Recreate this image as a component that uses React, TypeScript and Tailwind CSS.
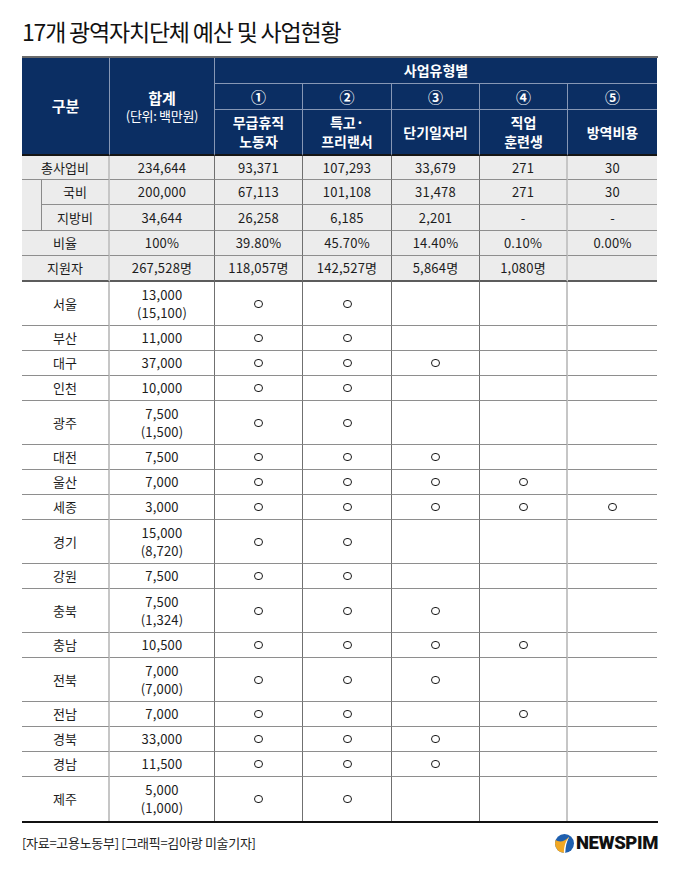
import React from 'react';

type Region = [string, string[], number[]];

const regions: Region[] = [
  ['서울', ['13,000', '(15,100)'], [1, 1, 0, 0, 0]],
  ['부산', ['11,000'], [1, 1, 0, 0, 0]],
  ['대구', ['37,000'], [1, 1, 1, 0, 0]],
  ['인천', ['10,000'], [1, 1, 0, 0, 0]],
  ['광주', ['7,500', '(1,500)'], [1, 1, 0, 0, 0]],
  ['대전', ['7,500'], [1, 1, 1, 0, 0]],
  ['울산', ['7,000'], [1, 1, 1, 1, 0]],
  ['세종', ['3,000'], [1, 1, 1, 1, 1]],
  ['경기', ['15,000', '(8,720)'], [1, 1, 0, 0, 0]],
  ['강원', ['7,500'], [1, 1, 0, 0, 0]],
  ['충북', ['7,500', '(1,324)'], [1, 1, 1, 0, 0]],
  ['충남', ['10,500'], [1, 1, 1, 1, 0]],
  ['전북', ['7,000', '(7,000)'], [1, 1, 1, 0, 0]],
  ['전남', ['7,000'], [1, 1, 0, 1, 0]],
  ['경북', ['33,000'], [1, 1, 1, 0, 0]],
  ['경남', ['11,500'], [1, 1, 1, 0, 0]],
  ['제주', ['5,000', '(1,000)'], [1, 1, 0, 0, 0]],
];

const vb = [
  'border-r border-r-[#8a8a8a]',
  'border-r-2 border-r-[#c6c6c6]',
  'border-r border-r-[#707070]',
  'border-r border-r-[#707070]',
  'border-r border-r-[#707070]',
  'border-r border-r-[#707070]',
  'border-r-2 border-r-[#c6c6c6]',
  '',
];

const hb = 'border-b border-b-[#8e8e8e]';

function Cell({ children, className = '' }: { children?: React.ReactNode; className?: string }) {
  return (
    <div className={`flex flex-col items-center justify-center text-center ${className}`}>{children}</div>
  );
}

const hdr = 'bg-[#0b2e63] text-white';
const hdrB = 'border-b border-b-[#8797b5]';
const hdrR = 'border-r border-r-[#8797b5]';
const hdrBottom = 'border-b-2 border-b-[#151515]';

function Mark() {
  return <span className="inline-block w-[9px] h-[8px] rounded-full border-[1.5px] border-[#1a1a1a]" />;
}

function Logo() {
  return (
    <div className="flex items-center gap-[2px]">
      <svg width="19" height="19" viewBox="0 0 20 20">
        <defs>
          <clipPath id="lc">
            <circle cx="10" cy="10" r="10" />
          </clipPath>
        </defs>
        <circle cx="10" cy="10" r="10" fill="#1f5fae" />
        <g clipPath="url(#lc)">
          <path d="M0 6 Q7 11 15 3 Q10 11 10.5 21 L0 21 Z" fill="#f1a824" />
          <path d="M15 3 Q9.5 9 9.2 20 L10.8 20 Q11 10 15 3 Z" fill="#ffffff" />
        </g>
      </svg>
      <span className="inline-block font-['Roboto',sans-serif] font-black text-[18.5px] leading-none tracking-[-0.4px] text-[#111]">
        NEWSPIM
      </span>
    </div>
  );
}

export default function App() {
  const types = ['①', '②', '③', '④', '⑤'];
  const names: string[][] = [['무급휴직', '노동자'], ['특고·', '프리랜서'], ['단기일자리'], ['직업', '훈련생'], ['방역비용']];

  const grayRows: { label: string; sub?: boolean; vals: string[]; h: string }[] = [
    { label: '총사업비', vals: ['234,644', '93,371', '107,293', '33,679', '271', '30'], h: hb },
    { label: '국비', sub: true, vals: ['200,000', '67,113', '101,108', '31,478', '271', '30'], h: hb },
    { label: '지방비', sub: true, vals: ['34,644', '26,258', '6,185', '2,201', '-', '-'], h: hb },
    { label: '비율', vals: ['100%', '39.80%', '45.70%', '14.40%', '0.10%', '0.00%'], h: hb },
    { label: '지원자', vals: ['267,528명', '118,057명', '142,527명', '5,864명', '1,080명', ''], h: 'border-b-2 border-b-[#5c5c5c]' },
  ];

  return (
    <div className="w-[680px] h-[874px] bg-white px-[22px] pt-[17px] font-['Noto_Sans_CJK_KR','Noto_Sans',sans-serif] text-[#1c1c1c]">
      <h1 className="h-[28px] leading-[28px] text-[23px] font-normal tracking-[-1.2px] text-[#111] mb-[11px]">
        17개 광역자치단체 예산 및 사업현황
      </h1>

      <div className="grid border-t-2 border-t-[#6a6a6a] border-b-2 border-b-[#111] grid-cols-[20px_68px_105px_88px_89px_88px_88px_89px] grid-rows-[26px_26px_46px_24px_25px_26px_25px_26px_44px_25px_25px_25px_44px_25px_25px_25px_44px_25px_44px_25px_44px_25px_25px_25px_44px]">
        {/* header */}
        <Cell className={`col-span-2 row-span-3 ${hdr} ${hdrR} ${hdrBottom} text-[15px] font-bold`}>구분</Cell>
        <Cell className={`row-span-3 ${hdr} ${hdrR} ${hdrBottom}`}>
          <span className="text-[15px] font-bold leading-[19px]">합계</span>
          <span className="text-[13px] leading-[18px] tracking-[-0.3px]">(단위: 백만원)</span>
        </Cell>
        <Cell className={`col-span-5 ${hdr} ${hdrB} text-[14px] font-bold`}>사업유형별</Cell>
        {types.map((t, i) => (
          <Cell key={t} className={`${hdr} ${hdrB} ${i < 4 ? hdrR : ''} text-[15px] font-bold leading-none`}>
            {t}
          </Cell>
        ))}
        {names.map((n, i) => (
          <Cell key={i} className={`${hdr} ${hdrBottom} ${i < 4 ? hdrR : ''} text-[14px] font-bold leading-[19px]`}>
            {n.map((l) => (
              <span key={l}>{l}</span>
            ))}
          </Cell>
        ))}

        {/* gray section */}
        {grayRows.map((r, ri) => (
          <React.Fragment key={r.label}>
            {r.label === '국비' && (
              <Cell className={`row-span-2 bg-[#ececec] ${vb[0]} ${hb}`} />
            )}
            <Cell
              className={`${r.sub ? '' : 'col-span-2'} bg-[#ececec] ${vb[1]} ${r.h} text-[13px] leading-[18px]`}
            >
              {r.label}
            </Cell>
            {r.vals.map((v, i) => (
              <Cell key={ri + '-' + i} className={`bg-[#ececec] ${vb[i + 2]} ${r.h} text-[13px] tracking-[0.2px] leading-[18px]`}>
                {v}
              </Cell>
            ))}
          </React.Fragment>
        ))}

        {/* regions */}
        {regions.map(([name, total, marks], ri) => {
          const last = ri === regions.length - 1;
          const b = last ? '' : hb;
          return (
            <React.Fragment key={name}>
              <Cell className={`col-span-2 ${vb[1]} ${b} text-[13px] leading-[18px]`}>{name}</Cell>
              <Cell className={`${vb[2]} ${b} text-[13px] tracking-[0.2px] leading-[18px]`}>
                {total.map((t) => (
                  <span key={t}>{t}</span>
                ))}
              </Cell>
              {marks.map((m, i) => (
                <Cell key={i} className={`${vb[i + 3]} ${b}`}>
                  {m ? <Mark /> : null}
                </Cell>
              ))}
            </React.Fragment>
          );
        })}
      </div>

      <div className="flex items-center justify-between mt-[10px] h-[20px]">
        <span className="text-[13px] leading-[20px] tracking-[-0.3px] text-[#222]">
          [자료=고용노동부] [그래픽=김아랑 미술기자]
        </span>
        <Logo />
      </div>
    </div>
  );
}
